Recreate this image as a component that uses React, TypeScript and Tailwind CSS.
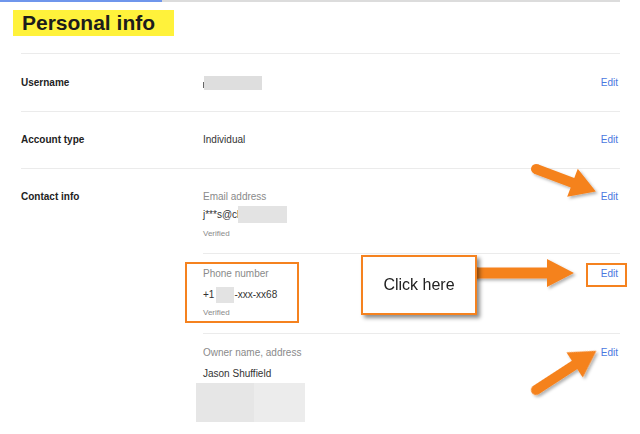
import React from "react";

const ORANGE = "#f5821f";

function Arrow({ x, y, len, angle, t = 10, h = 26, w = 30 }: { x: number; y: number; len: number; angle: number; t?: number; h?: number; w?: number }) {
  const pts = [
    [0, -t / 2],
    [len - h, -t / 2],
    [len - h, -w / 2],
    [len, 0],
    [len - h, w / 2],
    [len - h, t / 2],
    [0, t / 2],
  ]
    .map((p) => p.join(","))
    .join(" ");
  return (
    <g transform={`translate(${x} ${y}) rotate(${angle})`}>
      <circle cx={0} cy={0} r={t / 2} fill={ORANGE} />
      <polygon points={pts} fill={ORANGE} />
    </g>
  );
}

function Edit() {
  return <span className="text-[10px] leading-[12px] text-[#4a78e0]">Edit</span>;
}

export default function App() {
  return (
    <div className="relative w-[640px] h-[434px] overflow-hidden bg-white text-[#222] font-['Liberation_Sans',Arial,sans-serif]">
      {/* top bar */}
      <div className="flex h-[2px]">
        <div className="w-[162px] bg-[#6f96ec]" />
        <div className="w-[458px] bg-[#dcdcdc]" />
      </div>

      {/* heading */}
      <div className="pl-[13px] pt-[8px]">
        <h1 className="w-[161px] h-[26px] bg-[#fff23b] pl-[9px] text-[21px] font-bold leading-[26px] text-[#1c1c1c]">
          Personal info
        </h1>
      </div>

      {/* list */}
      <div className="ml-[21px] mt-[17px] w-[599px] border-t border-[#ebebeb]">
        <div className="flex h-[58px] items-center border-b border-[#ebebeb] pr-[2px]">
          <div className="w-[182px] text-[10px] font-bold leading-[12px]">Username</div>
          <div className="flex flex-1 items-end">
            <span className="mb-[2px] h-[6px] w-[1px] bg-[#666]" />
            <span className="h-[14px] w-[58px] bg-[#dedede]" />
          </div>
          <Edit />
        </div>

        <div className="flex h-[57px] items-center border-b border-[#ebebeb] pr-[2px]">
          <div className="w-[182px] text-[10px] font-bold leading-[12px]">Account type</div>
          <div className="flex-1 text-[10px] leading-[12px] text-[#333]">Individual</div>
          <Edit />
        </div>

        <div className="flex">
          <div className="w-[182px] pt-[22px] text-[10px] font-bold leading-[12px]">Contact info</div>
          <div className="flex-1">
            {/* email */}
            <div className="flex h-[85px] justify-between border-b border-[#ebebeb] pr-[2px] pt-[22px]">
              <div>
                <div className="text-[10px] leading-[12px] text-[#8a8a8a]">Email address</div>
                <div className="mt-[3px] flex h-[17px] items-center text-[10px] text-[#333]">
                  <span>j***s@cl</span>
                  <span className="-ml-[1px] h-[17px] w-[49px] bg-[#e3e3e3]" />
                </div>
                <div className="mt-[6px] text-[8px] leading-[10px] text-[#8a8a8a]">Verified</div>
              </div>
              <Edit />
            </div>

            {/* phone */}
            <div className="flex h-[80px] justify-between border-b border-[#ebebeb] pr-[2px] pt-[14px]">
              <div>
                <div className="text-[10px] leading-[12px] text-[#8a8a8a]">Phone number</div>
                <div className="mt-[6px] flex h-[17px] items-center text-[10px] text-[#333]">
                  <span>+1</span>
                  <span className="ml-[2px] h-[16px] w-[18px] bg-[#e3e3e3]" />
                  <span>-xxx-xx68</span>
                </div>
                <div className="mt-[5px] text-[8px] leading-[10px] text-[#8a8a8a]">Verified</div>
              </div>
              <Edit />
            </div>

            {/* owner */}
            <div className="flex justify-between pr-[2px] pt-[13px]">
              <div>
                <div className="text-[10px] leading-[12px] text-[#8a8a8a]">Owner name, address</div>
                <div className="mt-[9px] text-[10px] leading-[12px] text-[#333]">Jason Shuffield</div>
                <div className="mt-[3px] -ml-[7px] flex h-[39px]">
                  <span className="w-[58px] bg-[#e6e6e6]" />
                  <span className="w-[51px] bg-[#ececec]" />
                </div>
              </div>
              <Edit />
            </div>
          </div>
        </div>
      </div>

      {/* annotations */}
      <div className="absolute left-[185px] top-[262px] h-[61px] w-[114px] border-2 border-[#f5821f]" />
      <div className="absolute left-[586px] top-[263px] h-[24px] w-[41px] border-2 border-[#f5821f]" />
      <svg className="pointer-events-none absolute inset-0" width={640} height={434}>
        <defs>
          <filter id="sh" x="-20%" y="-20%" width="140%" height="140%">
            <feDropShadow dx="2" dy="2" stdDeviation="1.5" floodColor="#000" floodOpacity="0.3" />
          </filter>
        </defs>
        <g filter="url(#sh)">
          <Arrow x={536} y={169} len={64} angle={20.7} t={10} h={25} w={30} />
          <Arrow x={536} y={390} len={72} angle={-33} t={10} h={26} w={30} />
          <Arrow x={477} y={273} len={97} angle={0} t={11} h={27} w={28} />
        </g>
      </svg>
      <div className="absolute left-[361px] top-[255px] flex h-[60px] w-[116px] items-center justify-center border-2 border-[#f5821f] bg-white shadow-[3px_3px_4px_rgba(0,0,0,0.45)]">
        <span className="text-[16px] text-[#222]">Click here</span>
      </div>
    </div>
  );
}
